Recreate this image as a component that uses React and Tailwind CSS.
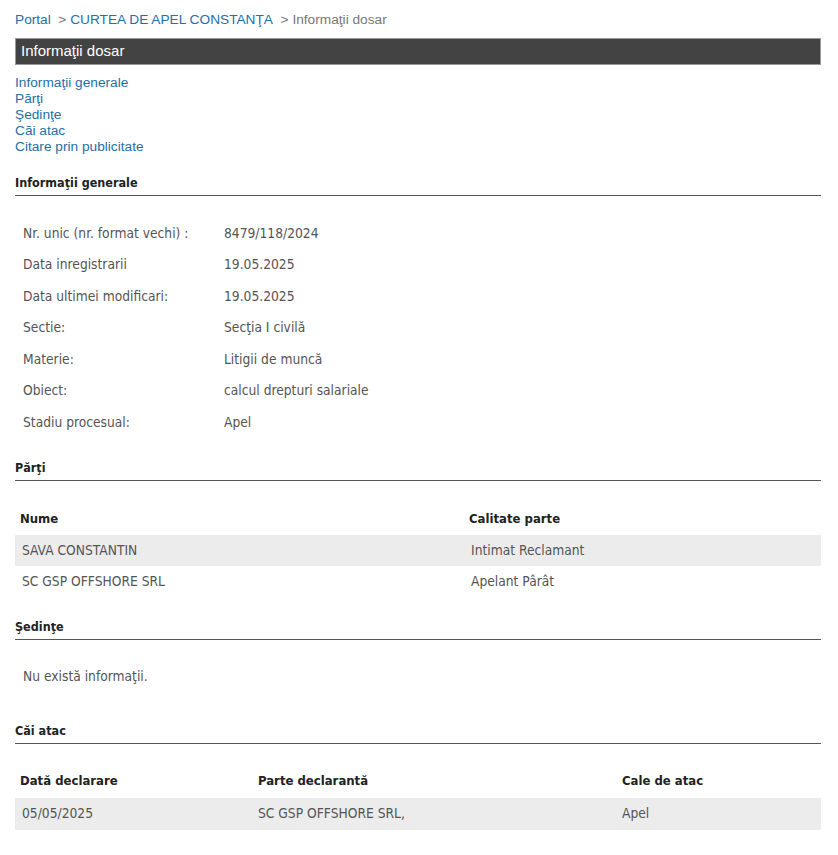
import React from 'react';

const info = [
    ['Nr. unic (nr. format vechi) :', '8479/118/2024'],
    ['Data inregistrarii', '19.05.2025'],
    ['Data ultimei modificari:', '19.05.2025'],
    ['Sectie:', 'Secţia I civilă'],
    ['Materie:', 'Litigii de muncă'],
    ['Obiect:', 'calcul drepturi salariale'],
    ['Stadiu procesual:', 'Apel'],
];

const parti = [
    ['SAVA CONSTANTIN', 'Intimat Reclamant'],
    ['SC GSP OFFSHORE SRL', 'Apelant Pârât'],
];

const body = { fontFamily: '"DejaVu Sans Condensed", "DejaVu Sans", sans-serif' };

const SectionTitle = ({ children }) => (
    <div className="border-b border-[#555] pb-[3px] text-[12.5px] leading-[18px] font-bold text-[#222]" style={body}>
        {children}
    </div>
);

const App = () => {
    return (
        <div className="min-h-[855px] bg-white pl-[15px] pr-[17px] pt-[10px] pb-6 text-[13.7px]" style={{ fontFamily: '"Liberation Sans", Arial, sans-serif' }}>
            <div className="leading-[20px]">
                <a className="text-[#2370a6]">Portal</a>
                <span className="text-[#777]">&nbsp; &gt; </span>
                <a className="text-[#2370a6]">CURTEA DE APEL CONSTANŢA</a>
                <span className="text-[#777]">&nbsp; &gt; Informaţii dosar</span>
            </div>

            <div className="mt-[8px] h-[27px] border border-[#999] bg-[#434343] px-[5px] text-[15px] leading-[23px] text-white">
                Informaţii dosar
            </div>

            <div className="mt-[10px] flex flex-col leading-[16px] text-[#2370a6]">
                <a>Informaţii generale</a>
                <a>Părţi</a>
                <a>Şedinţe</a>
                <a>Căi atac</a>
                <a>Citare prin publicitate</a>
            </div>

            <div className="mt-[19px]">
                <SectionTitle>Informaţii generale</SectionTitle>
                <div className="mt-[21px] flex flex-col text-[13.7px] text-[#555]" style={body}>
                    {info.map(([k, v]) => (
                        <div key={k} className="flex h-[31.6px] items-center px-[8px]">
                            <div className="w-[201px]">{k}</div>
                            <div>{v}</div>
                        </div>
                    ))}
                </div>
            </div>

            <div className="mt-[21px]">
                <SectionTitle>Părţi</SectionTitle>
                <div className="mt-[21px] text-[13.7px]" style={body}>
                    <div className="flex h-[33px] items-center px-[5px] text-[13px] font-bold text-[#222]">
                        <div className="w-[449px]">Nume</div>
                        <div>Calitate parte</div>
                    </div>
                    {parti.map(([n, c], i) => (
                        <div key={n} className={`flex h-[31px] items-center px-[7px] text-[#555] ${i % 2 === 0 ? 'bg-[#ececec]' : ''}`}>
                            <div className="w-[449px]">{n}</div>
                            <div>{c}</div>
                        </div>
                    ))}
                </div>
            </div>

            <div className="mt-[21px]">
                <SectionTitle>Şedinţe</SectionTitle>
                <div className="mt-[26px] px-[8px] text-[13.7px] text-[#555]" style={body}>
                    Nu există informaţii.
                </div>
            </div>

            <div className="mt-[35px]">
                <SectionTitle>Căi atac</SectionTitle>
                <div className="mt-[21px] text-[13.7px]" style={body}>
                    <div className="flex h-[33px] items-center px-[5px] text-[13px] font-bold text-[#222]">
                        <div className="w-[238px]">Dată declarare</div>
                        <div className="w-[364px]">Parte declarantă</div>
                        <div>Cale de atac</div>
                    </div>
                    <div className="flex h-[32px] items-center bg-[#ececec] px-[7px] text-[#555]">
                        <div className="w-[236px]">05/05/2025</div>
                        <div className="w-[364px]">SC GSP OFFSHORE SRL,</div>
                        <div>Apel</div>
                    </div>
                </div>
            </div>
        </div>
    );
};

export default App;
